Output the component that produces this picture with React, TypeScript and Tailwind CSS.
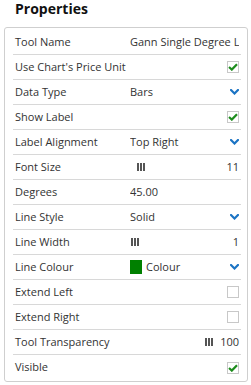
import { ReactNode } from "react";

type Row = {
  label: string;
  value?: ReactNode;
  right?: ReactNode;
};

function Chevron() {
  return (
    <svg width="9" height="6" viewBox="0 0 9 6" className="block">
      <path d="M1 1 L4.5 4.5 L8 1" fill="none" stroke="#1b74c4" strokeWidth="2.2" strokeLinecap="square" />
    </svg>
  );
}

function Checkbox({ checked }: { checked: boolean }) {
  return (
    <div className="w-[12px] h-[12px] border border-[#c8c8c8] bg-white flex items-center justify-center">
      {checked && (
        <svg width="10" height="8" viewBox="0 0 10 8" className="block">
          <path d="M1 4 L3.8 6.6 L9 1.2" fill="none" stroke="#1c8c1c" strokeWidth="2.2" />
        </svg>
      )}
    </div>
  );
}

function Bars() {
  return (
    <div className="flex gap-[1px] h-[8px]">
      <div className="w-[2px] bg-[#555]" />
      <div className="w-[2px] bg-[#555]" />
      <div className="w-[2px] bg-[#555]" />
    </div>
  );
}

const rows: Row[] = [
  { label: "Tool Name", value: <span className="whitespace-nowrap">Gann Single Degree L</span> },
  { label: "Use Chart's Price Unit", right: <Checkbox checked /> },
  { label: "Data Type", value: "Bars", right: <Chevron /> },
  { label: "Show Label", right: <Checkbox checked /> },
  { label: "Label Alignment", value: "Top Right", right: <Chevron /> },
  {
    label: "Font Size",
    value: (
      <div className="pl-[7px]">
        <Bars />
      </div>
    ),
    right: <span className="text-[#333]">11</span>,
  },
  { label: "Degrees", value: "45.00" },
  { label: "Line Style", value: "Solid", right: <Chevron /> },
  {
    label: "Line Width",
    value: (
      <div className="pl-[1px]">
        <Bars />
      </div>
    ),
    right: <span className="text-[#333]">1</span>,
  },
  {
    label: "Line Colour",
    value: (
      <div className="flex items-center gap-[4px] -ml-[2px]">
        <div className="w-[14px] h-[14px] bg-[#008000]" />
        <span>Colour</span>
      </div>
    ),
    right: <Chevron />,
  },
  { label: "Extend Left", right: <Checkbox checked={false} /> },
  { label: "Extend Right", right: <Checkbox checked={false} /> },
  {
    label: "Tool Transparency",
    right: (
      <div className="flex items-center gap-[7px]">
        <Bars />
        <span>100</span>
      </div>
    ),
  },
  { label: "Visible", right: <Checkbox checked /> },
];

export default function App() {
  return (
    <div className="w-[251px] h-[385px] bg-white text-[#333] font-['Open_Sans',sans-serif]">
      <div className="h-[27px] pl-[15px] text-[14px] leading-[18px] font-bold text-[#111]">Properties</div>
      <div className="ml-[4px] w-[244px] border border-[#cfcfcf] rounded-[3px] pl-[8px] pr-[6px] pt-[2px] pb-[1px]">
        {rows.map((row, i) => (
          <div
            key={row.label}
            className={`flex items-center h-[25px] pl-[2px] pr-[2px] text-[11px] ${
              i < rows.length - 1 ? "border-b border-[#d8d8d8]" : "h-[24px]"
            }`}
          >
            <div className="w-[115px] shrink-0 whitespace-nowrap">{row.label}</div>
            <div className="flex-1 min-w-0 overflow-hidden flex items-center">{row.value}</div>
            {row.right !== undefined && <div className="shrink-0 flex items-center pl-1">{row.right}</div>}
          </div>
        ))}
      </div>
    </div>
  );
}
